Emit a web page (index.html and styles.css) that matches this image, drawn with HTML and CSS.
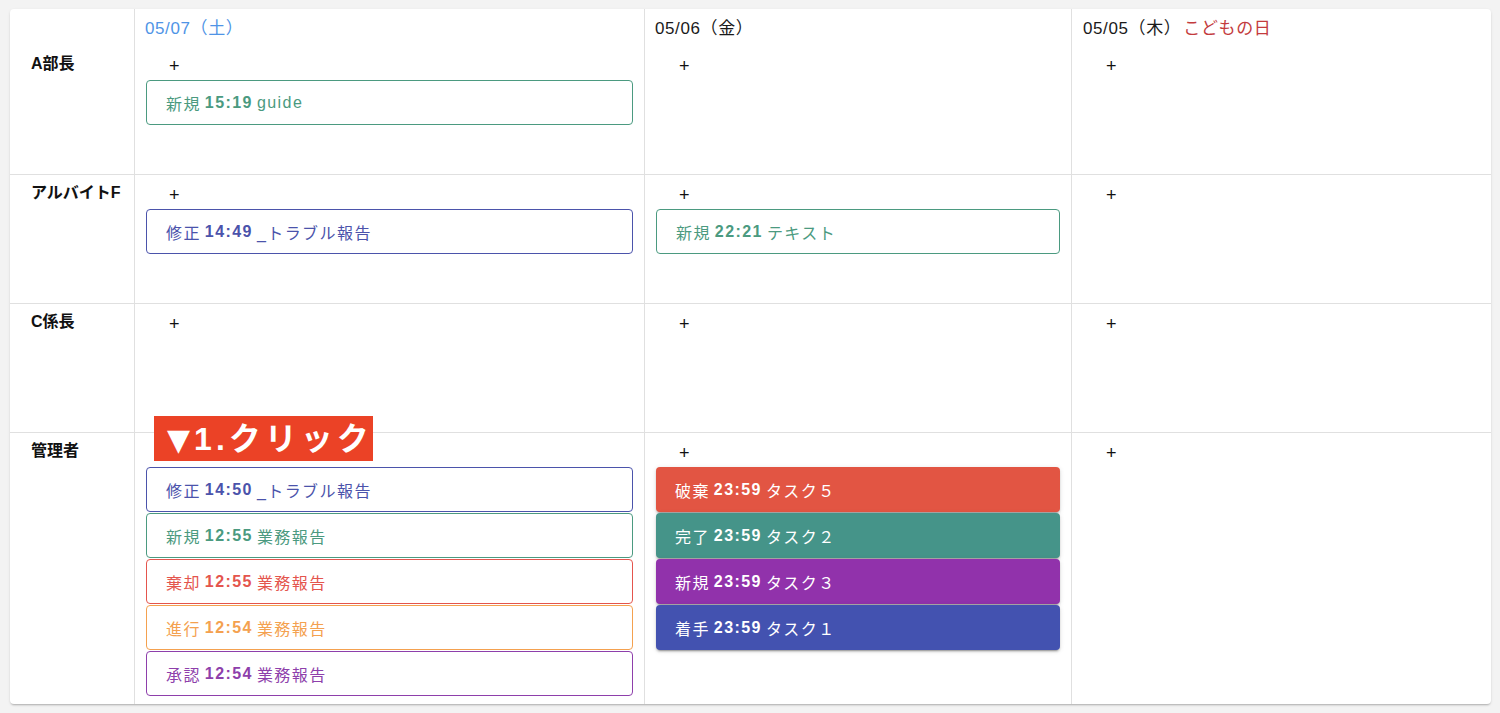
FILE: index.html
```html
<!DOCTYPE html>
<html lang="ja">
<head>
<meta charset="utf-8">
<title>Schedule</title>
<link rel="stylesheet" href="styles.css">
</head>
<body>
<div class="sheet">
  <div class="board">
    <div class="head corner"></div>
    <div class="head date"><span class="sat">05/07（土）</span></div>
    <div class="head date"><span>05/06（金）</span></div>
    <div class="head date"><span>05/05（木）</span><span class="holiday">こどもの日</span></div>

    <div class="label">A部長</div>
    <div class="cell">
      <div class="plus">+</div>
      <div class="task o-green"><span>新規</span><b>15:19</b><span>guide</span></div>
    </div>
    <div class="cell"><div class="plus">+</div></div>
    <div class="cell"><div class="plus">+</div></div>

    <div class="label ruled">アルバイトF</div>
    <div class="cell ruled">
      <div class="plus">+</div>
      <div class="task o-indigo"><span>修正</span><b>14:49</b><span>_トラブル報告</span></div>
    </div>
    <div class="cell ruled">
      <div class="plus">+</div>
      <div class="task o-green"><span>新規</span><b>22:21</b><span>テキスト</span></div>
    </div>
    <div class="cell ruled"><div class="plus">+</div></div>

    <div class="label ruled">C係長</div>
    <div class="cell ruled"><div class="plus">+</div></div>
    <div class="cell ruled"><div class="plus">+</div></div>
    <div class="cell ruled"><div class="plus">+</div></div>

    <div class="label ruled">管理者</div>
    <div class="cell ruled anchor">
      <div class="callout"><span class="tri">▼</span>1.クリック</div>
      <div class="plus blank"></div>
      <div class="task o-indigo"><span>修正</span><b>14:50</b><span>_トラブル報告</span></div>
      <div class="task o-green"><span>新規</span><b>12:55</b><span>業務報告</span></div>
      <div class="task o-red"><span>棄却</span><b>12:55</b><span>業務報告</span></div>
      <div class="task o-orange"><span>進行</span><b>12:54</b><span>業務報告</span></div>
      <div class="task o-purple"><span>承認</span><b>12:54</b><span>業務報告</span></div>
    </div>
    <div class="cell ruled">
      <div class="plus">+</div>
      <div class="task f-red"><span>破棄</span><b>23:59</b><span>タスク５</span></div>
      <div class="task f-teal"><span>完了</span><b>23:59</b><span>タスク２</span></div>
      <div class="task f-purple"><span>新規</span><b>23:59</b><span>タスク３</span></div>
      <div class="task f-indigo"><span>着手</span><b>23:59</b><span>タスク１</span></div>
    </div>
    <div class="cell ruled"><div class="plus">+</div></div>
  </div>
</div>
</body>
</html>
```

FILE: styles.css
```css
* { box-sizing: border-box; }

html, body {
  margin: 0;
  padding: 0;
}

body {
  background: #f3f3f3;
  font-family: "Liberation Sans", "Noto Sans CJK JP", sans-serif;
  color: #1a1a1a;
  width: 1500px;
  height: 713px;
  overflow: hidden;
}

.sheet {
  margin: 9px 9px 0 10px;
  width: 1481px;
  height: 695px;
  background: #fff;
  border-radius: 4px;
  box-shadow: 0 2px 2px -1px rgba(0,0,0,.22), 0 1px 3px 0 rgba(0,0,0,.10);
  overflow: hidden;
}

.board {
  display: grid;
  grid-template-columns: 124px 510px 427px 420px;
  grid-template-rows: 36px 129px 129px 129px 272px;
  height: 100%;
}

.head {
  font-size: 17px;
  letter-spacing: .6px;
  line-height: 36px;
  padding: 2px 0 0 10px;
  white-space: nowrap;
}

.head.corner { padding: 0; }

.date { border-left: 1px solid #e0e0e0; }

.date.head:nth-child(4) { padding-left: 11px; }

.sat { color: #4f94e6; }

.holiday {
  color: #c33b3d;
  margin-left: 2px;
}

.label {
  font-size: 16px;
  font-weight: bold;
  line-height: 24px;
  padding: 7px 0 0 21px;
  white-space: nowrap;
  color: #111;
}

.cell {
  border-left: 1px solid #e0e0e0;
  padding: 9px 11px 0 11px;
}

.ruled { border-top: 1px solid #e0e0e0; }

.cell.ruled { padding-top: 8px; }
.label.ruled { padding-top: 6px; }

.anchor { position: relative; }

.plus {
  height: 24px;
  line-height: 24px;
  font-size: 18px;
  padding-left: 23px;
  color: #111;
}

.task {
  height: 45px;
  margin-top: 2px;
  margin-bottom: -1px;
  border-radius: 4px;
  border: 1px solid currentColor;
  display: flex;
  align-items: center;
  gap: 4px;
  padding-left: 19px;
  font-size: 16px;
  letter-spacing: .0892em;
  white-space: nowrap;
  background: #fff;
}

.task b { font-weight: bold; }

.o-green  { color: #4b9a80; }
.o-indigo { color: #4b53ab; }
.o-red    { color: #e4554d; }
.o-orange { color: #f4a14f; }
.o-purple { color: #8e3fab; }

.f-red, .f-teal, .f-purple, .f-indigo {
  color: #fff;
  border: none;
  box-shadow: 0 3px 1px -2px rgba(0,0,0,.2), 0 2px 2px 0 rgba(0,0,0,.14), 0 1px 5px 0 rgba(0,0,0,.12);
}

.f-red    { background: #e25543; }
.f-teal   { background: #459489; }
.f-purple { background: #9132ab; }
.f-indigo { background: #4352b0; }

.callout {
  position: absolute;
  left: 19px;
  top: -17px;
  width: 219px;
  height: 45px;
  background: #eb4226;
  color: #fff;
  font-family: "Liberation Sans", "Noto Sans CJK JP", sans-serif;
  font-weight: bold;
  font-size: 32px;
  line-height: 46px;
  letter-spacing: 4px;
  padding-left: 13px;
  white-space: nowrap;
  z-index: 2;
}

.tri {
  font-family: "DejaVu Sans", sans-serif;
  font-size: 30px;
  letter-spacing: 0;
  margin-right: 4px;
}
```
